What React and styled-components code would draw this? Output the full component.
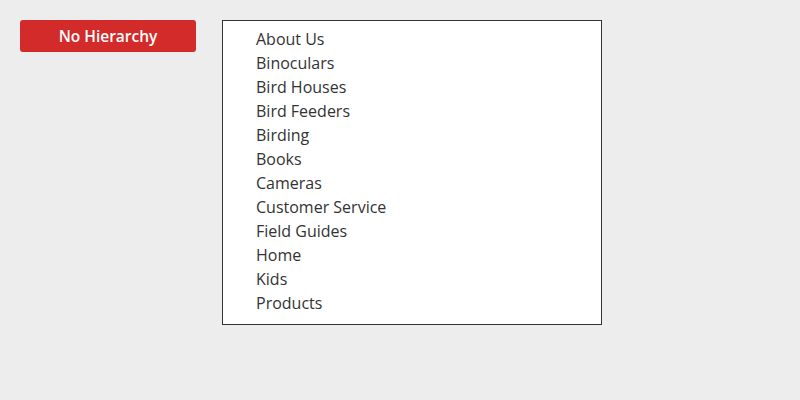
import React from "react";
import styled, { createGlobalStyle } from "styled-components";

const GlobalStyle = createGlobalStyle`
  html, body {
    margin: 0;
    padding: 0;
    background: #ededed;
    font-family: 'Open Sans', 'Liberation Sans', sans-serif;
  }
`;

const Page = styled.div`
  display: flex;
  align-items: flex-start;
  gap: 26px;
  padding: 20px;
  min-height: 400px;
  box-sizing: border-box;
`;

const Button = styled.button`
  width: 176px;
  height: 32px;
  background: #d32a2a;
  color: #fff;
  border: none;
  border-radius: 3px;
  font-family: 'Open Sans', 'Liberation Sans', sans-serif;
  font-size: 15.5px;
  font-weight: 600;
  cursor: pointer;
  padding: 0;
`;

const List = styled.ul`
  list-style: none;
  margin: 0;
  width: 380px;
  box-sizing: border-box;
  padding: 6px 0 9px 33px;
  background: #fff;
  border: 1px solid #333;
`;

const Item = styled.li`
  font-size: 16px;
  line-height: 24px;
  color: #333;
`;

const items = [
  "About Us",
  "Binoculars",
  "Bird Houses",
  "Bird Feeders",
  "Birding",
  "Books",
  "Cameras",
  "Customer Service",
  "Field Guides",
  "Home",
  "Kids",
  "Products",
];

export default function App() {
  return (
    <>
      <GlobalStyle />
      <Page>
        <Button>No Hierarchy</Button>
        <List>
          {items.map((name) => (
            <Item key={name}>{name}</Item>
          ))}
        </List>
      </Page>
    </>
  );
}
